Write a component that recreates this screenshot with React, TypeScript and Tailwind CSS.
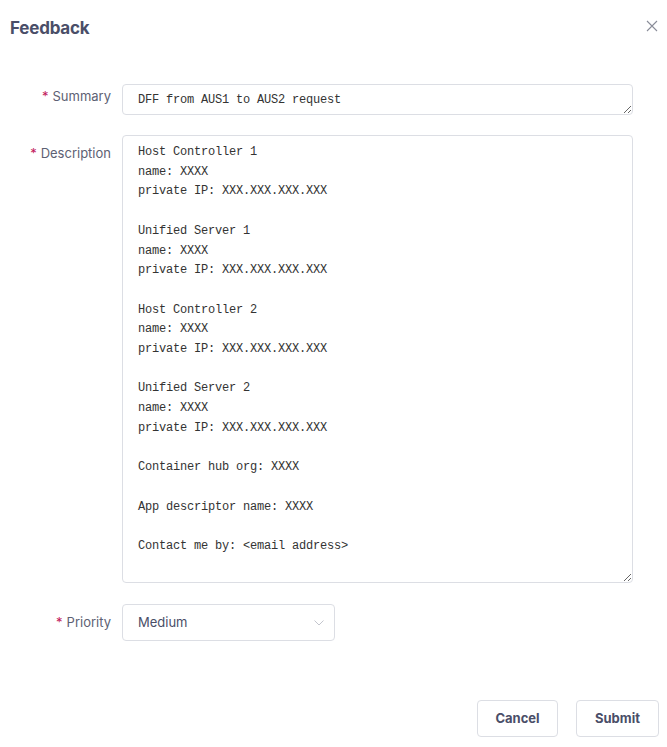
import { useState } from 'react';

const description = `Host Controller 1
name: XXXX
private IP: XXX.XXX.XXX.XXX

Unified Server 1
name: XXXX
private IP: XXX.XXX.XXX.XXX

Host Controller 2
name: XXXX
private IP: XXX.XXX.XXX.XXX

Unified Server 2
name: XXXX
private IP: XXX.XXX.XXX.XXX

Container hub org: XXXX

App descriptor name: XXXX

Contact me by: <email address>`;

function Label({ text, className }: { text: string; className?: string }) {
  return (
    <div className={`flex justify-end pr-[11px] text-[13px] text-[#5d6173] ${className ?? ''}`}>
      <span className="text-[#c2185b] mr-[4px]">*</span>
      {text}
    </div>
  );
}

export default function App() {
  const [summary, setSummary] = useState('DFF from AUS1 to AUS2 request');
  const [desc, setDesc] = useState(description);

  return (
    <div className="w-[667px] h-[747px] bg-white relative font-['Inter',sans-serif]">
      {/* Header */}
      <div className="flex items-start justify-between pl-[10px] pr-[9px] pt-[17px]">
        <h1 className="text-[17px] font-bold text-[#4a4e68] leading-[22px] tracking-[-0.2px]">Feedback</h1>
        <button className="mt-[3px] text-[#8a8d99]">
          <svg width="12" height="12" viewBox="0 0 12 12" fill="none" stroke="currentColor" strokeWidth="1.1">
            <path d="M1 1l10 10M11 1L1 11" />
          </svg>
        </button>
      </div>

      {/* Form */}
      <div className="mt-[45px] grid grid-cols-[122px_511px] gap-y-[20px]">
        <Label text="Summary" className="pt-[3px] leading-[18px]" />
        <textarea
          value={summary}
          onChange={e => setSummary(e.target.value)}
          rows={1}
          className="h-[31px] w-full border border-[#dcdee4] rounded-[4px] px-[15px] pt-[6px] font-['Liberation_Mono',monospace] text-[12px] tracking-[-0.2px] leading-[19.7px] text-[#333] outline-none resize-y overflow-hidden"
        />

        <Label text="Description" className="pt-[9px] leading-[18px]" />
        <textarea
          value={desc}
          onChange={e => setDesc(e.target.value)}
          className="h-[448px] w-full border border-[#dcdee4] rounded-[4px] px-[15px] pt-[7px] font-['Liberation_Mono',monospace] text-[12px] tracking-[-0.2px] leading-[19.7px] text-[#333] outline-none resize-y overflow-hidden"
        />

        <Label text="Priority" className="items-center mt-[1px]" />
        <div className="mt-[1px] w-[213px] h-[37px] border border-[#dcdee4] rounded-[4px] flex items-center justify-between pl-[15px] pr-[10px]">
          <span className="text-[13px] text-[#4a4e68]">Medium</span>
          <svg width="10" height="6" viewBox="0 0 10 6" fill="none" stroke="#c3c5cd" strokeWidth="1">
            <path d="M0.5 0.5L5 5l4.5-4.5" />
          </svg>
        </div>
      </div>

      {/* Footer */}
      <div className="mt-[59px] flex justify-end gap-[18px] pr-[8px]">
        <button className="w-[81px] h-[37px] border border-[#dcdee4] rounded-[4px] text-[13px] font-bold text-[#4a4e68]">
          Cancel
        </button>
        <button className="w-[83px] h-[37px] border border-[#dcdee4] rounded-[4px] text-[13px] font-bold text-[#4a4e68]">
          Submit
        </button>
      </div>
    </div>
  );
}
